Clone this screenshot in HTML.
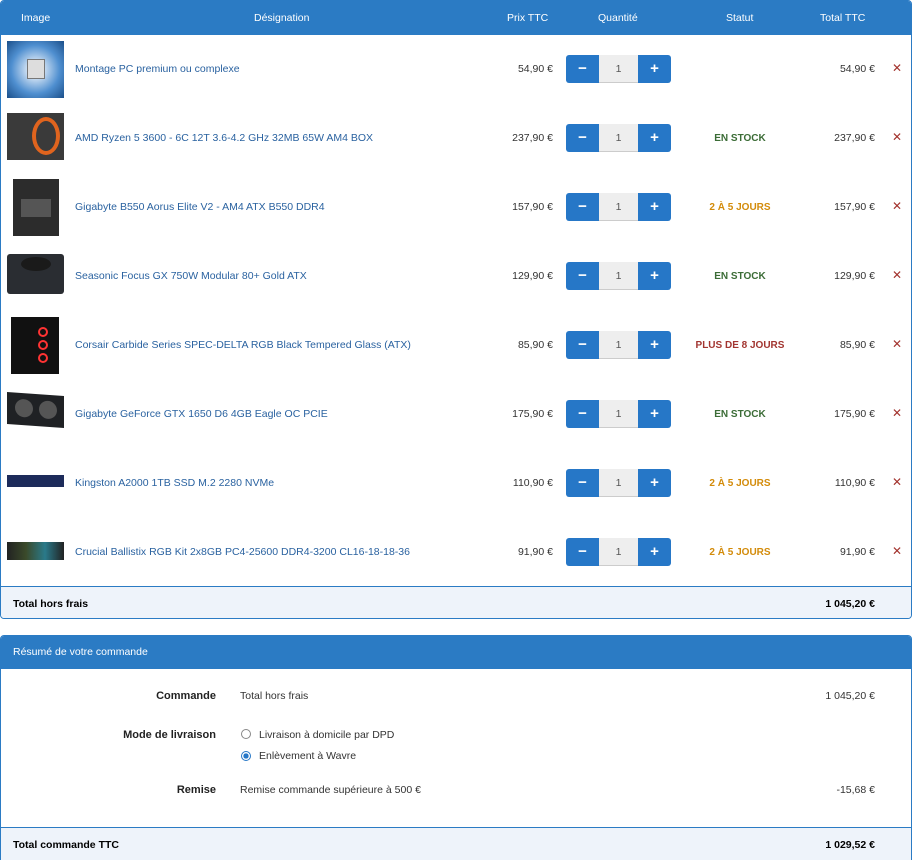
<!DOCTYPE html>
<html style="height:860px;overflow:hidden"><head><meta charset="utf-8"><style>
*{box-sizing:border-box;margin:0;padding:0}
body{width:913px;height:860px;background:#fff;font-family:"Liberation Sans",Arial,sans-serif;font-size:10.5px;color:#333;position:relative;overflow:hidden}
.p1{position:absolute;left:0;top:0;width:912px;height:619px;border:1px solid #2b7bc4;border-radius:4px;overflow:hidden}
.hd{position:absolute;left:0;top:0;width:100%;height:34px;background:#2b7bc4;color:#fff}
.hd span{position:absolute;top:11px;font-size:10.5px}
.row{position:absolute;left:0;width:100%;height:69px}
.img{position:absolute;left:6px;top:6px;width:57px;height:57px}
.des{position:absolute;left:74px;top:28px;color:#2a62a0}
.pr{position:absolute;right:358px;top:28px;text-align:right}
.q{position:absolute;left:565px;top:20px;width:105px;height:28px}
.q .m,.q .pl{position:absolute;top:0;width:33px;height:28px;background:#2677c7;color:#fff;font-weight:bold;font-size:15px;text-align:center;line-height:27px}
.q .m{left:0;border-radius:3px 0 0 3px}
.q .pl{right:0;border-radius:0 3px 3px 0}
.q .i{position:absolute;left:33px;top:0;width:39px;height:28px;background:#eee;text-align:center;line-height:28px;color:#555;border-bottom:1px solid #ccc}
.st{position:absolute;left:639px;width:200px;text-align:center;top:29px;font-weight:bold;font-size:10px}
.g{color:#3b6c36}.o{color:#d38b0a}.r{color:#a23530}
.tt{position:absolute;right:36px;top:28px}
.x{position:absolute;left:891px;top:26px;color:#a3332e;font-size:12px}
.ft{position:absolute;left:0;width:100%;background:#eef3fa;border-top:1px solid #2b7bc4;font-weight:bold;color:#000}
.p2{position:absolute;left:0;top:635px;width:912px;height:232px;border:1px solid #2b7bc4;border-radius:4px;overflow:hidden}
.lb{position:absolute;right:695px;font-weight:bold;color:#222;font-size:11px}
.vl{position:absolute;left:239px}
.rd{position:absolute;left:240px;width:10px;height:10px;border-radius:50%;border:1px solid #888;background:#fff}
</style></head><body>
<div class="p1">
 <div class="hd">
  <span style="left:20px">Image</span>
  <span style="left:253px">Désignation</span>
  <span style="left:506px">Prix TTC</span>
  <span style="left:597px">Quantité</span>
  <span style="left:725px">Statut</span>
  <span style="left:819px">Total TTC</span>
 </div>

 <div class="row" style="top:34px">
  <div class="img" style="background:radial-gradient(circle,#eef4fb 10%,#4f8fd0 60%,#1b4f8a)"><div style="position:absolute;left:20px;top:18px;width:18px;height:20px;background:#ddd;border:1px solid #777"></div></div>
  <div class="des">Montage PC premium ou complexe</div>
  <div class="pr">54,90 €</div>
  <div class="q"><div class="m">−</div><div class="i">1</div><div class="pl">+</div></div>
  <div class="tt">54,90 €</div><div class="x">✕</div>
 </div>
 <div class="row" style="top:103px">
  <div class="img" style="top:9px;height:47px;background:#3a3a3a"><div style="position:absolute;right:4px;top:4px;width:28px;height:38px;border-radius:50%;border:4px solid #e0641e"></div></div>
  <div class="des">AMD Ryzen 5 3600 - 6C 12T 3.6-4.2 GHz 32MB 65W AM4 BOX</div>
  <div class="pr">237,90 €</div>
  <div class="q"><div class="m">−</div><div class="i">1</div><div class="pl">+</div></div>
  <div class="st g">EN STOCK</div>
  <div class="tt">237,90 €</div><div class="x">✕</div>
 </div>
 <div class="row" style="top:172px">
  <div class="img" style="left:12px;width:46px;background:#2c2c2c"><div style="position:absolute;left:8px;top:20px;width:30px;height:18px;background:#555"></div></div>
  <div class="des">Gigabyte B550 Aorus Elite V2 - AM4 ATX B550 DDR4</div>
  <div class="pr">157,90 €</div>
  <div class="q"><div class="m">−</div><div class="i">1</div><div class="pl">+</div></div>
  <div class="st o">2 À 5 JOURS</div>
  <div class="tt">157,90 €</div><div class="x">✕</div>
 </div>
 <div class="row" style="top:241px">
  <div class="img" style="top:12px;height:40px;background:#2a2d32;border-radius:3px"><div style="position:absolute;left:14px;top:3px;width:30px;height:14px;border-radius:50%;background:#1a1a1a"></div></div>
  <div class="des">Seasonic Focus GX 750W Modular 80+ Gold ATX</div>
  <div class="pr">129,90 €</div>
  <div class="q"><div class="m">−</div><div class="i">1</div><div class="pl">+</div></div>
  <div class="st g">EN STOCK</div>
  <div class="tt">129,90 €</div><div class="x">✕</div>
 </div>
 <div class="row" style="top:310px">
  <div class="img" style="left:10px;width:48px;background:#111"><div style="position:absolute;left:27px;top:10px;width:10px;height:10px;border-radius:50%;border:2px solid #f33"></div><div style="position:absolute;left:27px;top:23px;width:10px;height:10px;border-radius:50%;border:2px solid #f33"></div><div style="position:absolute;left:27px;top:36px;width:10px;height:10px;border-radius:50%;border:2px solid #f33"></div></div>
  <div class="des">Corsair Carbide Series SPEC-DELTA RGB Black Tempered Glass (ATX)</div>
  <div class="pr">85,90 €</div>
  <div class="q"><div class="m">−</div><div class="i">1</div><div class="pl">+</div></div>
  <div class="st r">PLUS DE 8 JOURS</div>
  <div class="tt">85,90 €</div><div class="x">✕</div>
 </div>
 <div class="row" style="top:379px">
  <div class="img" style="top:14px;height:32px;background:#1f2124;transform:skewY(4deg)"><div style="position:absolute;left:8px;top:6px;width:18px;height:18px;border-radius:50%;background:#555"></div><div style="position:absolute;left:32px;top:6px;width:18px;height:18px;border-radius:50%;background:#555"></div></div>
  <div class="des">Gigabyte GeForce GTX 1650 D6 4GB Eagle OC PCIE</div>
  <div class="pr">175,90 €</div>
  <div class="q"><div class="m">−</div><div class="i">1</div><div class="pl">+</div></div>
  <div class="st g">EN STOCK</div>
  <div class="tt">175,90 €</div><div class="x">✕</div>
 </div>
 <div class="row" style="top:448px">
  <div class="img" style="top:26px;height:12px;background:#1d2b5a"></div>
  <div class="des">Kingston A2000 1TB SSD M.2 2280 NVMe</div>
  <div class="pr">110,90 €</div>
  <div class="q"><div class="m">−</div><div class="i">1</div><div class="pl">+</div></div>
  <div class="st o">2 À 5 JOURS</div>
  <div class="tt">110,90 €</div><div class="x">✕</div>
 </div>
 <div class="row" style="top:517px">
  <div class="img" style="top:24px;height:18px;background:linear-gradient(90deg,#222,#3a4a2a,#2a7a8a,#222)"></div>
  <div class="des">Crucial Ballistix RGB Kit 2x8GB PC4-25600 DDR4-3200 CL16-18-18-36</div>
  <div class="pr">91,90 €</div>
  <div class="q"><div class="m">−</div><div class="i">1</div><div class="pl">+</div></div>
  <div class="st o">2 À 5 JOURS</div>
  <div class="tt">91,90 €</div><div class="x">✕</div>
 </div>

 <div class="ft" style="top:585px;height:34px">
  <span style="position:absolute;left:12px;top:11px">Total hors frais</span>
  <span style="position:absolute;right:36px;top:11px">1 045,20 €</span>
 </div>
</div>

<div class="p2">
 <div class="hd" style="height:33px"><span style="left:12px;top:10px">Résumé de votre commande</span></div>
 <div class="lb" style="top:54px">Commande</div>
 <div class="vl" style="top:54px">Total hors frais</div>
 <div style="position:absolute;right:36px;top:54px">1 045,20 €</div>
 <div class="lb" style="top:93px">Mode de livraison</div>
 <div class="rd" style="top:93px"></div>
 <div class="vl" style="left:258px;top:93px">Livraison à domicile par DPD</div>
 <div class="rd" style="top:115px;border:1px solid #2677c7;background:radial-gradient(circle,#2677c7 45%,#fff 50%)"></div>
 <div class="vl" style="left:258px;top:114px">Enlèvement à Wavre</div>
 <div class="lb" style="top:148px">Remise</div>
 <div class="vl" style="top:148px">Remise commande supérieure à 500 €</div>
 <div style="position:absolute;right:36px;top:148px">-15,68 €</div>
 <div class="ft" style="top:191px;height:60px">
  <span style="position:absolute;left:12px;top:11px">Total commande TTC</span>
  <span style="position:absolute;right:36px;top:11px">1 029,52 €</span>
 </div>
</div>
</body></html>
